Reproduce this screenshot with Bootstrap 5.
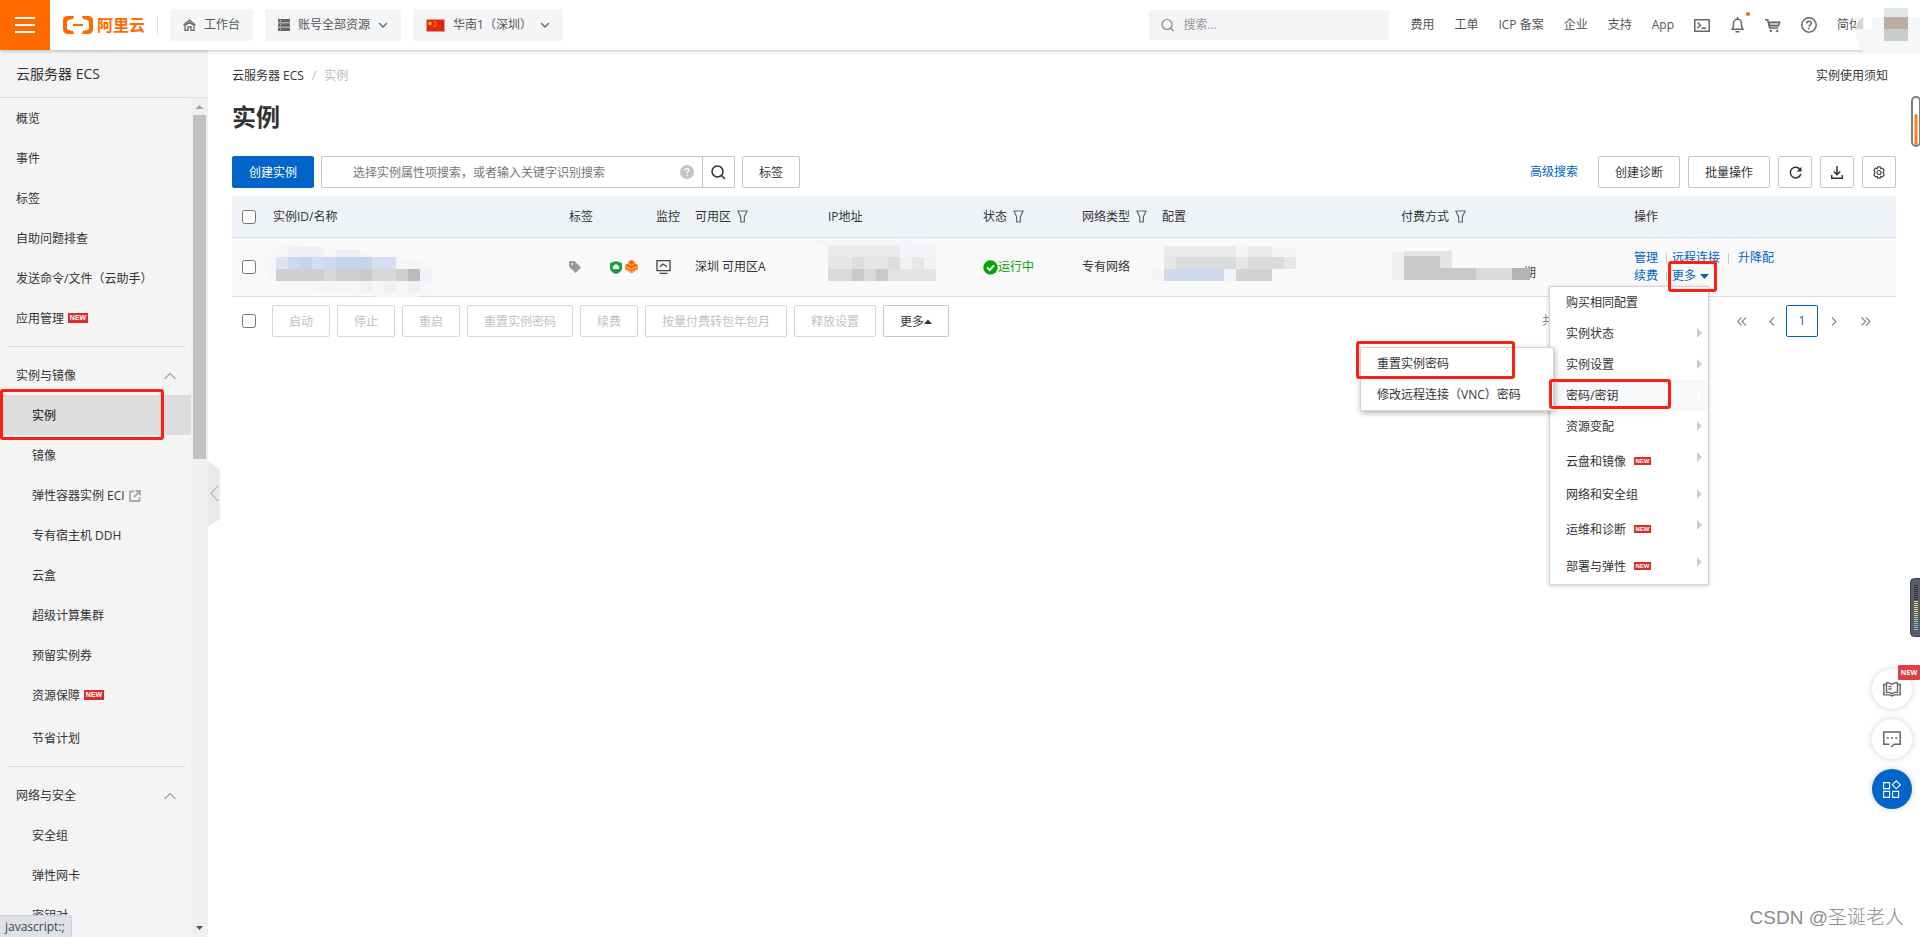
<!DOCTYPE html>
<html lang="zh-CN">
<head>
<meta charset="utf-8">
<meta name="viewport" content="width=device-width, initial-scale=1">
<title>云服务器 ECS - 实例</title>
<link href="https://cdn.jsdelivr.net/npm/bootstrap@5.3.0/dist/css/bootstrap.min.css" rel="stylesheet">
<style>
body{font-family:"Open Sans","Noto Sans CJK SC",sans-serif;font-size:12px;line-height:18px;color:#333;height:100vh;overflow:hidden;background:#fff}
svg{display:block;flex:none}
a{color:inherit;text-decoration:none}
a.act{color:#0064c8}
/* header */
.topbar{height:50px;box-shadow:0 1px 4px rgba(0,0,0,.25);z-index:20;background:#fff;color:#555}
.burger{width:50px;height:50px;background:#ff6a00;border:0;padding:0}
.brand{color:#ff6a00;font-size:16px;font-weight:700;line-height:20px;margin-left:13px}
.vline{width:1px;height:18px;background:#ddd;margin:0 12px}
.hbtns{gap:12px}
.hbtn{height:32px;background:#f4f5f7;border:0;border-radius:2px;color:#555;padding:0 13px}
.hsearch{width:240px;height:30px;background:#f4f5f7;padding:0 12px;gap:9px}
.hsearch input{background:none;border:0;outline:0;color:#555;width:100%;padding:0}
.hsearch input::placeholder{color:#999}
.topnav{gap:20px;margin-left:21px;padding-right:59px}
.dot{width:4px;height:4px;border-radius:50%;background:#ff6a00;top:-5px;right:-5px}
.avatar{right:0;top:0}
/* sidebar */
.side{width:208px;background:#f4f4f4;flex:none}
.side-title{height:48px;border-bottom:1px solid #ddd;font-size:14px;padding-left:16px}
.side-list{overflow:hidden;min-width:0}
.side-list a,.side-group{height:40px;flex:none;padding:2px 0 0 16px;display:flex;align-items:center;position:relative}
.side-list a.sub{padding-left:32px}
.side-list a.on{background:#ddd;font-weight:500}
.side-list a.tall{height:43px;padding-bottom:3px}
.side-group{border:0;background:none;width:100%;justify-content:space-between;padding-right:15px;color:#333}
.side-rule{height:1px;background:#ddd;margin:8px 6px 8px 7px;flex:none}
.newtag{background:#dc2e28;color:#fff;font:700 7px/10px "Liberation Sans",sans-serif;width:20px;height:10px;text-align:center;margin:-2px 0 0 4px}
.newtag.sm{width:17px;height:8px;font-size:6px;line-height:8px;margin-left:8px}
.track{width:17px;background:#f0f0f0;flex:none}
.thumb{width:13px;background:#c1c1c1;height:41%}
.fold{left:208px;top:461px;border:0;background:none;padding:0;z-index:5}
/* main */
.content{padding:0 24px;min-width:0}
.crumbs{height:51px;padding:1px 8px 0 0}
.crumbs .gone{color:#bbb}
h1{font-size:24px;font-weight:700;line-height:32px;margin:0 0 23px}
.cbtn{height:32px;border:1px solid #c0c6cc;border-radius:2px;background:#fff;color:#333;padding:1px 16px 0;flex:none}
.cbtn.primary{background:#0064c8;border-color:#0064c8;color:#fff}
.cbtn.sq{width:34px;padding:0;display:flex;align-items:center;justify-content:center}
.cbtn:disabled{color:#c1c1c1;border-color:#d8d8d8}
.finder{width:414px;height:32px;border:1px solid #c0c6cc;border-radius:2px}
.finder input{border:0;outline:0;padding:1px 0 0 31px;min-width:0;background:none}
.finder input::placeholder{color:#777}
.finder button{border:0;border-left:1px solid #c0c6cc;background:none;width:32px;height:30px;padding:0 0 0 8px}
.gap6{gap:6px}
.gap7{gap:7px}
input[type=checkbox]{width:14px;height:14px;margin:0;display:block}
.grid{table-layout:fixed;width:100%;margin:8px 0 0;border-collapse:separate;border-spacing:0}
.grid th{height:41px;background:#eff3f8;font-weight:400;padding:0;vertical-align:middle}
.grid td{height:60px;background:#f9f9f9;padding:0;vertical-align:middle;border-bottom:1px solid #ddd;border-top:1px solid #e0e4ea}
.grid th:first-child,.grid td:first-child{padding-left:10px}
.grid .mosaic{width:1px;height:44px;overflow:visible;shape-rendering:crispEdges}
.grid .mosaic.pay{width:123px;height:36px;z-index:1}
.sep{width:1px;height:11px;background:#ccc;margin:0 5px 0 8px}
.sep.wide{margin-right:9px}
.ok{color:#00a700}
.footbar{padding:8px 14px 0 10px}
.pager{color:#888}
.pager .total{width:184px;overflow:hidden;white-space:nowrap}
.pager button{border:0;background:none;padding:0;height:32px;width:32px;color:#888;display:flex;align-items:center;justify-content:center}
.pager button.prev{width:28px}
.pager button.cur{border:1px solid #0064c8;border-radius:2px;color:#0064c8}
/* action menu */
.trig{width:37px}
.amenu{position:absolute;right:0;top:19px;width:160px;z-index:8;background:#fff;border:1px solid #d4d4d4;box-shadow:0 1px 4px rgba(0,0,0,.2);margin:0;padding:0;list-style:none;white-space:nowrap}
.amenu li{height:31px;padding:1px 6px 0 16px;position:relative;display:flex;align-items:center;color:#333}
.amenu li.tall{height:37px;padding-top:3px}
.amenu li.has::after{content:"";position:absolute;right:6px;top:10px;border:5px solid transparent;border-left-color:#ccc;border-right:0}
.amenu li.hov{background:#f7f8fa}
.amenu li.hov::after{border-left-color:#fff}
.amenu.inner{width:194px;right:154px;top:-33px;box-shadow:1px 2px 6px rgba(0,0,0,.3)}
.hl{position:absolute;border:3px solid #ff1e10;border-radius:3px;z-index:9;pointer-events:none}
.hl-side{left:0;width:164px;top:-6px;height:51px}
.hl-more{left:-4px;top:-6px;width:49px;height:31px}
.hl-key{left:-1px;top:-1px;width:122px;height:30px}
.hl-reset{left:-5px;top:-7px;width:159px;height:38px}
/* floating tools */
.dock{right:8px;bottom:128px;gap:10px;z-index:5}
.dock button{width:40px;height:40px;border:0;border-radius:50%;background:#fff;box-shadow:0 0 6px rgba(0,0,0,.18);padding:0;display:flex;align-items:center;justify-content:center;position:relative}
.dock button.blue{background:#0064c8}
.dock .flag{position:absolute;right:-8px;top:-4px;width:22px;height:15px;background:#dd4044;color:#fff;border-radius:1px;font:700 7px/16px "Open Sans",sans-serif;text-align:center}
.gauge{right:-1px;top:96px;z-index:5}
.meter-w{right:0;top:578px;z-index:5}
.wm{right:16px;bottom:5px;font-size:19px;line-height:28px;color:#8c8c8c;font-weight:300;font-family:"Liberation Sans","Noto Sans CJK SC",sans-serif}
.statusline{left:0;bottom:0;width:72px;height:22px;background:#dee1e6;border:1px solid #cdd0d5;border-left:0;border-bottom:0;border-radius:0 3px 0 0;padding-left:5px;line-height:21px;z-index:9;color:#444}
</style>
</head>
<body class="d-flex flex-column">
<svg width="0" height="0" class="position-absolute" aria-hidden="true">
<symbol id="funnel" viewBox="0 0 12 14"><path d="M1 1h10L8 7.500V13H4V7.500z" fill="none" stroke="#666" stroke-width="1.300"/></symbol>
<symbol id="up" viewBox="0 0 12 8"><path d="M.5 7 6 1.500 11.500 7" fill="none" stroke="#aaa" stroke-width="1.500"/></symbol>
<symbol id="down" viewBox="0 0 10 7"><path d="M1 1l4 4 4-4" fill="none" stroke="#666" stroke-width="1.300"/></symbol>
</svg>

<header class="topbar d-flex align-items-center position-relative flex-shrink-0">
<button class="burger flex-shrink-0" aria-label="菜单"><svg width="50" height="50" stroke="#fff" stroke-width="2"><path d="M15 18h20M15 25h20M15 32h20"/></svg></button>
<a href="#" class="brand d-flex align-items-center gap-1"><svg width="30" height="18" viewBox="0 0 30 18" fill="#ff6a00"><path d="M11 0H5Q0 0 0 5v8q0 5 5 5h6l-1-3-4.500-1Q4 13.600 4 12V6q0-1.600 1.500-2L10 3zM19 0h6q5 0 5 5v8q0 5-5 5h-6l1-3 4.500-1q1.500-.4 1.500-2V6q0-1.600-1.500-2L20 3zM10 8h10v2H10z"/></svg><span>阿里云</span></a>
<span class="vline"></span>
<div class="hbtns d-flex">
<button class="hbtn d-flex align-items-center gap-2"><svg width="13" height="12" viewBox="0 0 13 12" fill="none" stroke="#666" stroke-width="1.300"><path d="M.5 6 6.500 1l6 5M2 6.500V11.300h3V8h3v3.300h3V6.500L6.500 3.200z"/></svg>工作台</button>
<button class="hbtn d-flex align-items-center gap-2"><svg width="12" height="12" viewBox="0 0 12 12"><path fill="#666" d="M0 0h12v3.400H0zM0 4.300h12v3.400H0zM0 8.600h12V12H0z"/><path stroke="#eee" d="M2 1.700h1M2 6h1M2 10.300h1"/></svg>账号全部资源<svg width="10" height="7"><use href="#down"/></svg></button>
<button class="hbtn d-flex align-items-center gap-2"><svg width="19" height="13" viewBox="0 0 19 13"><path fill="#de2910" stroke="#ddd" stroke-width=".5" d="M.3.3h18.400v12.400H.3z"/><path fill="#ffde00" d="m4 2 .7 1.600 1.700.1-1.300 1 .5 1.700L4 5.500 2.400 6.400l.5-1.700-1.300-1 1.700-.1zM8 2h1v1H8zM9.500 3.500h1v1h-1zM9.500 5.500h1v1h-1zM8 7h1v1H8z"/></svg>华南1（深圳）<svg width="10" height="7"><use href="#down"/></svg></button>
</div>
<label class="hsearch d-flex align-items-center ms-auto"><svg width="13" height="14" viewBox="0 0 13 14" fill="none" stroke="#888" stroke-width="1.200"><circle cx="6" cy="6.500" r="5"/><path d="m9.500 10 3 3"/></svg><input type="text" placeholder="搜索..." aria-label="搜索"></label>
<nav class="topnav d-flex align-items-center text-nowrap">
<a href="#">费用</a><a href="#">工单</a><a href="#">ICP 备案</a><a href="#">企业</a><a href="#">支持</a><a href="#">App</a>
<a href="#" aria-label="终端"><svg width="16" height="13" viewBox="0 0 16 13" fill="none" stroke="#666" stroke-width="1.500"><path d="M.8.8h14.400v11.400H.8zM3.500 3.500l3 2.800-3 2.800M7.500 9.200h4.500"/></svg></a>
<a href="#" aria-label="消息" class="position-relative"><svg width="15" height="16" viewBox="0 0 15 16" fill="none" stroke="#666" stroke-width="1.500"><path d="M7.500 0v2M2 12.200h11L11.500 9.500V6.500a4 4.200 0 0 0-8 0v3zM5.500 14.700h4"/></svg><span class="dot position-absolute"></span></a>
<a href="#" aria-label="购物车"><svg width="16" height="15" viewBox="0 0 16 15" fill="none" stroke="#666" stroke-width="1.500"><path d="M0 1.700h2.700l2 8.300h8.500"/><path fill="#666" fill-opacity=".35" d="M3.500 4.200h11.200l-1.200 3.600H4.500z"/><circle cx="5.800" cy="13" r="1.200" fill="#666" stroke="none"/><circle cx="12.300" cy="13" r="1.200" fill="#666" stroke="none"/></svg></a>
<a href="#" aria-label="帮助"><svg width="16" height="16" viewBox="0 0 16 16" fill="none" stroke="#666" stroke-width="1.500"><circle cx="8" cy="8" r="7.200"/><path d="M5.700 6.500c0-3 4.600-3 4.600-.4C10.300 7.800 8 7.800 8 9.700M8 10.800v1.700"/></svg></a>
<a href="#">简体</a>
</nav>
<svg class="avatar position-absolute" width="66" height="54" shape-rendering="crispEdges"><path fill="#f7f7f7" d="M2 17h64v36H10Q0 42 2 17z"/><path fill="#fff" d="M10 0h20v29H10z"/><path fill="#d6d6d6" d="M2 29c0-5 3-10 7-12v12z"/><path fill="#f4f7f7" d="M18 17h48v12H18z"/><path fill="#e2e7ea" d="M30 8h24v9H30z"/><path fill="#bcaca6" d="M30 17h24v12H30z"/><path fill="#c8cdce" d="M30 29h24v12H30z"/></svg>
</header>

<div class="d-flex flex-grow-1" style="min-height:0">
<aside class="side d-flex flex-column">
<div class="side-title d-flex align-items-center">云服务器 ECS</div>
<div class="d-flex flex-grow-1" style="min-height:0">
<nav class="side-list d-flex flex-column flex-grow-1">
<a href="#">概览</a><a href="#">事件</a><a href="#">标签</a><a href="#">自助问题排查</a><a href="#">发送命令/文件（云助手）</a><a href="#">应用管理<span class="newtag">NEW</span></a>
<div class="side-rule"></div>
<button class="side-group">实例与镜像<svg width="12" height="8"><use href="#up"/></svg></button>
<a href="#" class="sub on">实例<span class="hl hl-side"></span></a>
<a href="#" class="sub">镜像</a>
<a href="#" class="sub">弹性容器实例 ECI<svg class="ms-1" width="12" height="12" viewBox="0 0 12 12" fill="none" stroke="#aaa" stroke-width="1.800"><path d="M5 1.500H1v9.500h9.500V7M6.500 1h4.500v4.500M11 1 5 7"/></svg></a>
<a href="#" class="sub">专有宿主机 DDH</a><a href="#" class="sub">云盒</a><a href="#" class="sub">超级计算集群</a><a href="#" class="sub">预留实例券</a>
<a href="#" class="sub tall">资源保障<span class="newtag">NEW</span></a>
<a href="#" class="sub">节省计划</a>
<div class="side-rule"></div>
<button class="side-group">网络与安全<svg width="12" height="8"><use href="#up"/></svg></button>
<a href="#" class="sub">安全组</a><a href="#" class="sub">弹性网卡</a><a href="#" class="sub">密钥对</a>
</nav>
<div class="track d-flex flex-column align-items-center"><svg width="17" height="17"><path fill="#a3a3a3" d="M4.500 11h8l-4-4z"/></svg><div class="thumb"></div><svg class="mt-auto" width="17" height="17"><path fill="#505050" d="M5 6h7l-3.500 4z"/></svg></div>
</div>
</aside>
<button class="fold position-absolute" aria-label="收起"><svg width="12" height="66" viewBox="0 0 12 66"><path fill="#eaeaea" d="M0 0l12 8v50L0 66z"/><path fill="none" stroke="#bbb" stroke-width="1.300" d="M10 25l-7 7.500 7 7.500"/></svg></button>

<main class="content flex-grow-1">
<div class="crumbs d-flex align-items-center justify-content-between"><div><a href="#">云服务器 ECS</a><span class="gone mx-1 px-1">/</span><span class="gone">实例</span></div><a href="#">实例使用须知</a></div>
<h1>实例</h1>
<div class="d-flex align-items-center gap7">
<button class="cbtn primary">创建实例</button>
<div class="finder d-flex align-items-center flex-shrink-0"><input class="flex-grow-1" type="text" placeholder="选择实例属性项搜索，或者输入关键字识别搜索" aria-label="搜索实例">
<svg class="me-2" width="14" height="14" viewBox="0 0 14 14"><circle cx="7" cy="7" r="7" fill="#c4c4c4"/><path d="M5 5.500c0-2.500 4-2.500 4-.3C9 6.700 7 6.700 7 8.300M7 9.500v1.500" fill="none" stroke="#fff" stroke-width="1.300"/></svg>
<button aria-label="搜索"><svg width="15" height="15" viewBox="0 0 15 15" fill="none" stroke="#333" stroke-width="1.500"><circle cx="6.500" cy="6.500" r="5.500"/><path d="m10.500 10.500 3.500 3.500"/></svg></button></div>
<button class="cbtn">标签</button>
<div class="d-flex align-items-center gap-2 ms-auto">
<a href="#" class="act me-2 pe-1">高级搜索</a>
<button class="cbtn">创建诊断</button><button class="cbtn">批量操作</button>
<button class="cbtn sq" aria-label="刷新"><svg width="13" height="13" viewBox="0 0 13 13"><path d="M11.300 4A5.300 5.300 0 1 0 11.800 8" fill="none" stroke="#333" stroke-width="1.500"/><path fill="#333" d="M12.500.7v4.800H7.700z"/></svg></button>
<button class="cbtn sq" aria-label="下载"><svg width="12" height="13" viewBox="0 0 12 13" fill="none" stroke="#333" stroke-width="1.500"><path d="M6 0v8.500M2.800 5.500 6 8.700l3.200-3.200M.7 9v3.200h10.600V9"/></svg></button>
<button class="cbtn sq" aria-label="设置"><svg width="12" height="13" viewBox="0 0 12 13" fill="none" stroke="#444" stroke-width="1.200"><path d="M4.800.8h2.400l.5 1.800 1.800-.5 1.600 2-1 2.400 1 2.400-1.600 2-1.800-.5-.5 1.800H4.800l-.5-1.800-1.800.5-1.600-2 1-2.400-1-2.400 1.600-2 1.800.5z"/><circle cx="6" cy="6.500" r="2"/></svg></button>
</div></div>

<table class="grid">
<colgroup><col style="width:41px"><col><col style="width:87px"><col style="width:39px"><col style="width:133px"><col style="width:155px"><col style="width:99px"><col style="width:80px"><col style="width:239px"><col style="width:233px"><col style="width:262px"></colgroup>
<thead><tr>
<th><input type="checkbox" aria-label="全选"></th><th>实例ID/名称</th><th>标签</th><th>监控</th>
<th><div class="d-flex align-items-center gap6">可用区<svg width="11" height="13"><use href="#funnel"/></svg></div></th><th>IP地址</th>
<th><div class="d-flex align-items-center gap6">状态<svg width="11" height="13"><use href="#funnel"/></svg></div></th>
<th><div class="d-flex align-items-center gap6">网络类型<svg width="11" height="13"><use href="#funnel"/></svg></div></th><th>配置</th>
<th><div class="d-flex align-items-center gap6">付费方式<svg width="11" height="13"><use href="#funnel"/></svg></div></th><th>操作</th>
</tr></thead>
<tbody><tr>
<td><input type="checkbox" aria-label="选择实例"></td>
<td><svg class="mosaic"><path fill="#f5f6f9" d="M-9 24Q-14 4 16 0l60 6 60 8q24 2 23 14l-1 20q-10 6-50 4l-56-5L0 36z"/><path fill="#edf0f7" d="M15 2h36v10H15zM63 4h24v8H63z"/><path fill="#dde3f0" d="M3 12h12v12H3z"/><path fill="#cdd9ee" d="M15 12h12v12H15zM51 12h12v12H51z"/><path fill="#c5d4ea" d="M27 12h12v12H27zM63 12h36v12H63z"/><path fill="#d5def0" d="M39 12h12v12H39zM99 12h24v12H99z"/><path fill="#cfcfcf" d="M3 24h144v12H3z"/><path fill="#d8d8d8" d="M51 24h12v12H51zM99 24h24v12H99z"/><path fill="#cdc6cb" d="M87 24h12v12H87z"/><path fill="#bcbbba" d="M135 24h12v12h-12z"/><path fill="#f0f1f4" d="M87 36h12v12H87zM111 36h12v12h-12zM135 36h12v12h-12zM147 24h12v12h-12z"/></svg></td>
<td><div class="d-flex align-items-center"><svg width="12" height="12" viewBox="0 0 12 12"><path fill="#999" d="M1 0h4.500L12 6.500 6.500 12 0 5.500V1z"/><circle cx="3" cy="3" r="1" fill="#fff"/></svg>
<svg width="12" height="13" viewBox="0 0 12 13" style="margin-left:29px"><path fill="#1e9b48" d="M6 0 12 2v5q0 4-6 6Q0 11 0 7V2z"/><path fill="#fff" d="M3.500 8a1.600 1.600 0 0 1 .3-3 2.300 2.300 0 0 1 4.400 0 1.600 1.600 0 0 1 .3 3z"/></svg>
<svg width="13" height="14" viewBox="0 0 13 14" style="margin-left:3px"><path fill="#ff6a00" d="m6.500 0 3 1.500v1.700l3.300 1.600v4.700L6.500 13.500.2 9.500V4.800l3.300-1.600V1.500z"/><path stroke="#ffd2ae" stroke-width=".9" fill="none" d="M.5 6.300l6 3.200 6-3.200M.5 8.800l6 3.500 6-3.500M3.500 3.800l3 1.500 3-1.500"/></svg></div></td>
<td><svg width="15" height="14" viewBox="0 0 15 14" fill="none" stroke="#444" stroke-width="1.300"><path d="M1 .7h13v10H1zM3.500 13.300h8M4 6.800l3-2.800 4 2.800"/></svg></td>
<td>深圳 可用区A</td>
<td><svg class="mosaic"><path fill="#ebebeb" d="M0 0h72v12H0z"/><path fill="#f4f5f8" d="M-12-5h90l30 5v12H72V0H-20z"/><path fill="#e6e6e6" d="M0 12h108v12H0z"/><path fill="#dcdddf" d="M24 12h12v12H24zM60 12h12v12H60z"/><path fill="#f1f2f3" d="M72 12h12v12H72zM96 12h12v12H96z"/><path fill="#dadada" d="M0 24h60v12H0z"/><path fill="#c9c9c9" d="M24 24h12v12H24zM48 24h12v12H48z"/><path fill="#e2e3e3" d="M60 24h48v12H60z"/></svg></td>
<td><span class="ok d-flex align-items-center"><svg width="15" height="15" viewBox="0 0 15 15"><circle cx="7.500" cy="7.500" r="7.200" fill="#00a700"/><path d="m4 7.500 2.600 2.500L11 5.500" fill="none" stroke="#fff" stroke-width="2"/></svg>运行中</span></td>
<td>专有网络</td>
<td><svg class="mosaic"><path fill="#ebebec" d="M2 1h108v11H2z"/><path fill="#f5f5f6" d="M74 1h12v11H74zM110 3h24v9h-24zM-10 24H2v12h-12z"/><path fill="#dadbdd" d="M2 12h120v12H2z"/><path fill="#e6e6e8" d="M2 12h12v12H2zM74 12h12v12H74zM122 12h12v12h-12z"/><path fill="#ced9ec" d="M2 24h60v12H2z"/><path fill="#eef4fa" d="M62 24h12v12H62z"/><path fill="#d3d3d2" d="M74 24h36v12H74z"/></svg></td>
<td><div class="d-flex align-items-center pt-1"><svg class="mosaic pay"><path fill="#efefef" d="M-9 1H3v28H-9z"/><path fill="#cacacc" d="M3 5h36v24H3z"/><path fill="#e4e4e6" d="M3 0h48v5H3zM39 5h12v12H39z"/><path fill="#cac9c9" d="M27 17h48v12H27z"/><path fill="#dadada" d="M75 17h36v12H75z"/><path fill="#b3b3b3" d="M111 17h18v12h-18z"/></svg><span class="pt-2">期</span></div></td>
<td><div class="d-flex align-items-center"><a href="#" class="act">管理</a><span class="sep"></span><a href="#" class="act">远程连接</a><span class="sep wide"></span><a href="#" class="act">升降配</a></div>
<div class="d-flex align-items-center"><a href="#" class="act">续费</a><span class="sep"></span>
<div class="position-relative trig"><a href="#" class="act d-flex align-items-center">更多<svg class="ms-1" width="9" height="5"><path fill="#0064c8" d="M0 0h9L4.500 5z"/></svg></a><span class="hl hl-more"></span>
<ul class="amenu">
<li>购买相同配置</li><li class="has">实例状态</li><li class="has">实例设置</li>
<li class="has hov">密码/密钥<span class="hl hl-key"></span>
<ul class="amenu inner"><li>重置实例密码<span class="hl hl-reset"></span></li><li>修改远程连接（VNC）密码</li></ul></li>
<li class="has">资源变配</li><li class="has tall">云盘和镜像<span class="newtag sm">NEW</span></li><li class="has">网络和安全组</li><li class="has tall">运维和诊断<span class="newtag sm">NEW</span></li><li class="has tall">部署与弹性<span class="newtag sm">NEW</span></li>
</ul></div></div></td>
</tr></tbody></table>

<div class="footbar d-flex align-items-center">
<input type="checkbox" aria-label="全选本页">
<div class="d-flex gap7 ms-3">
<button class="cbtn" disabled>启动</button><button class="cbtn" disabled>停止</button><button class="cbtn" disabled>重启</button><button class="cbtn" disabled>重置实例密码</button><button class="cbtn" disabled>续费</button><button class="cbtn" disabled>按量付费转包年包月</button><button class="cbtn" disabled>释放设置</button>
<button class="cbtn d-flex align-items-center">更多<svg width="8" height="5"><path fill="#333" d="M0 5h8L4 .5z"/></svg></button></div>
<div class="pager d-flex align-items-center ms-auto"><span class="total">共有1条</span>
<button aria-label="首页"><svg width="10" height="9" fill="none" stroke="#888" stroke-width="1.200"><path d="M4.500.5l-4 4 4 4M9 .5l-4 4 4 4"/></svg></button>
<button aria-label="上一页" class="prev"><svg width="6" height="9" fill="none" stroke="#888" stroke-width="1.200"><path d="M5 .5l-4 4 4 4"/></svg></button>
<button class="cur">1</button>
<button aria-label="下一页"><svg width="6" height="9" fill="none" stroke="#888" stroke-width="1.200"><path d="M1 .5l4 4-4 4"/></svg></button>
<button aria-label="末页"><svg width="10" height="9" fill="none" stroke="#888" stroke-width="1.200"><path d="M.5.5l4 4-4 4M5 .5l4 4-4 4"/></svg></button></div>
</div>
</main>
</div>

<svg class="gauge position-absolute" width="10" height="52" viewBox="0 0 10 52"><rect x="1" y="1" width="8" height="49" rx="4" fill="#fff" stroke="#7f7f7f" stroke-width="2"/><rect x="3.500" y="18" width="3" height="31" rx="1.500" fill="#ff7a20"/></svg>
<svg class="meter-w position-absolute" width="10" height="59" viewBox="0 0 10 59"><rect x=".5" y=".5" width="14" height="58" rx="4" fill="#585c6b" stroke="#3a3c47"/><path stroke="#2f313a" stroke-width="4" stroke-dasharray="1 1" d="M6 7v16"/><path stroke="#e3dc6b" stroke-width="4" stroke-dasharray="1 1" d="M6 23v12"/><path stroke="#a6dc8e" stroke-width="4" stroke-dasharray="1 1" d="M6 35v10"/><path stroke="#66cfc4" stroke-width="4" stroke-dasharray="1 1" d="M6 45v8"/></svg>
<div class="dock position-absolute d-flex flex-column">
<button aria-label="文档"><svg width="18" height="15" viewBox="0 0 18 15" fill="none" stroke="#666" stroke-width="1.400"><path d="M9 2.300Q6 .3 3.500 1v9.500q3-.5 5.500 1.200 2.500-1.700 5.500-1.200V1Q12 .3 9 2.300zM3 2.500H.8v10.400h6L9 14l2.200-1.100h6V2.500H15M5.500 4.500h3M5.500 7h3"/></svg><span class="flag">NEW</span></button>
<button aria-label="反馈"><svg width="18" height="17" viewBox="0 0 18 17" fill="none" stroke="#666" stroke-width="1.500"><path d="M6.500 13.200H.8V1h16.400v12.200h-6L8 16M3.800 7h2M8 7h2M12.200 7h2"/></svg></button>
<button class="blue" aria-label="工具"><svg width="18" height="18" viewBox="0 0 18 18" fill="none" stroke="#fff" stroke-width="1.100"><path d="M.6 2.600h6v6h-6zM.6 11.400h6v6h-6zM9.600 11.400h6v6h-6zM13.300.8l4 4-4 4-4-4z"/></svg></button>
</div>
<div class="wm position-absolute">CSDN @圣诞老人</div>
<div class="statusline position-absolute">javascript:;</div>
<script src="https://cdn.jsdelivr.net/npm/bootstrap@5.3.0/dist/js/bootstrap.bundle.min.js"></script>
</body>
</html>
